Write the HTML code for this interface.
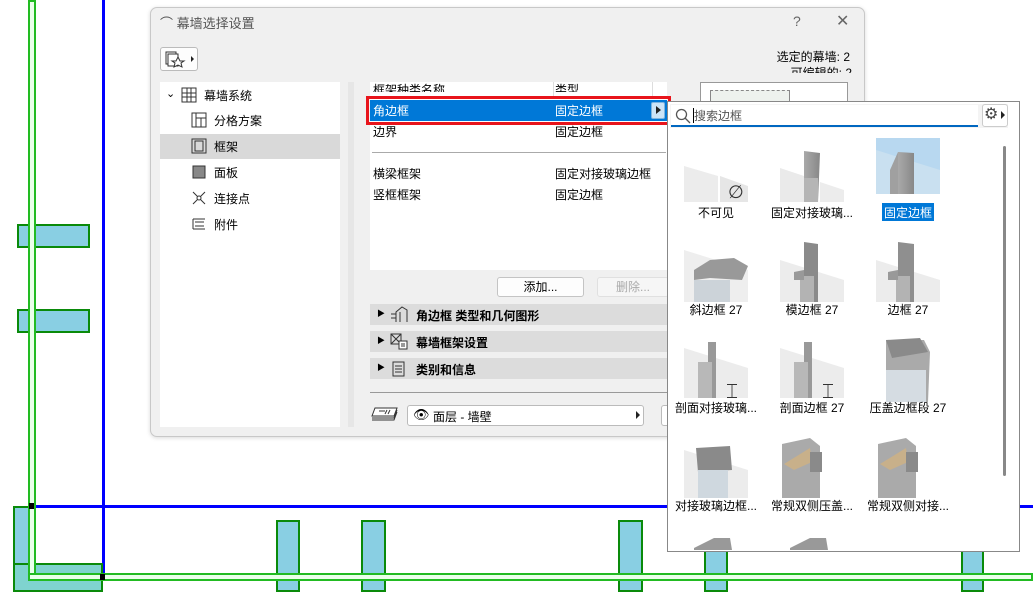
<!DOCTYPE html>
<html><head><meta charset="utf-8"><style>
*{margin:0;padding:0;box-sizing:border-box}
body{width:1033px;height:608px;overflow:hidden;background:#fff;position:relative;font-family:"Liberation Sans","Noto Sans CJK SC",sans-serif;font-size:12px;color:#000}
.a{position:absolute}
.pb{position:absolute;background:#89cfe3;border:2px solid #0a8a0a}
.t{position:absolute;white-space:nowrap}
.sec{position:absolute;left:370px;width:297px;height:21px;background:#dcdcdc;font-weight:bold}
.lab{position:absolute;width:96px;text-align:center;white-space:nowrap;font-size:12px}
</style></head><body>
<!-- canvas -->
<div class="a" style="left:102px;top:0;width:3px;height:578px;background:#0000ff"></div>
<div class="a" style="left:30px;top:505px;width:1003px;height:3px;background:#0000ff"></div>
<div class="pb" style="left:17px;top:224px;width:73px;height:24px"></div>
<div class="pb" style="left:17px;top:309px;width:73px;height:24px"></div>
<div class="pb" style="left:13px;top:506px;width:22px;height:86px"></div>
<div class="pb" style="left:13px;top:563px;width:90px;height:29px;background:#7fd3cf"></div>
<div class="pb" style="left:276px;top:520px;width:24px;height:72px"></div>
<div class="pb" style="left:361px;top:520px;width:25px;height:72px"></div>
<div class="pb" style="left:618px;top:520px;width:25px;height:72px"></div>
<div class="pb" style="left:704px;top:520px;width:24px;height:72px"></div>
<div class="pb" style="left:961px;top:548px;width:23px;height:44px"></div>
<div class="a" style="left:28px;top:0;width:8px;height:578px;border:2px solid #22bb22;background:#eaffea"></div>
<div class="a" style="left:28px;top:573px;width:1005px;height:8px;border:2px solid #22bb22;background:#eaffea"></div>
<div class="a" style="left:29px;top:503px;width:5px;height:6px;background:#000"></div>
<div class="a" style="left:100px;top:574px;width:5px;height:6px;background:#000"></div>

<!-- dialog -->
<div class="a" style="left:150px;top:7px;width:715px;height:430px;background:#f0f0f0;border:1px solid #c8c8c8;border-radius:7px;box-shadow:0 1px 4px rgba(0,0,0,.15)"></div>
<div class="t" style="left:160px;top:13px;font-size:13px;color:#555">⌒ 幕墙选择设置</div>
<div class="t" style="left:793px;top:13px;font-size:14px;color:#666">?</div>
<div class="t" style="left:836px;top:11px;font-size:16px;color:#666">✕</div>
<div class="a" style="left:160px;top:47px;width:38px;height:24px;background:#fdfdfd;border:1px solid #bbb;border-radius:3px"></div>
<svg class="a" style="left:164px;top:50px" width="32" height="18"><rect x="2" y="2" width="10" height="12" fill="none" stroke="#333"/><rect x="4" y="4" width="10" height="12" fill="#fff" stroke="#333"/><polygon points="14,7 16,11 20,11 17,13 18,17 14,15 10,17 11,13 8,11 12,11" fill="#fff" stroke="#333"/><polygon points="27,6 30,9 27,12" fill="#222"/></svg>
<div class="t" style="right:183px;top:48px;font-size:12px">选定的幕墙: 2</div>
<div class="a" style="left:780px;top:64px;width:80px;height:9px;overflow:hidden"><div class="t" style="right:8px;top:0;font-size:12px">可编辑的: 2</div></div>

<!-- tree -->
<div class="a" style="left:160px;top:82px;width:180px;height:345px;background:#fff"></div>
<div class="a" style="left:160px;top:134px;width:180px;height:25px;background:#d9d9d9"></div>
<div class="t" style="left:166px;top:87px;font-size:11px">⌄</div>
<svg class="a" style="left:181px;top:87px" width="16" height="16"><rect x="1" y="1" width="14" height="14" fill="none" stroke="#333"/><path d="M6 1v14M10 1v14M1 6h14M1 10h14" stroke="#333"/></svg>
<div class="t" style="left:204px;top:87px">幕墙系统</div>
<svg class="a" style="left:191px;top:112px" width="16" height="16"><rect x="1" y="1" width="14" height="14" fill="none" stroke="#333"/><path d="M5 1v14M5 6h10M10 6v9" stroke="#333"/></svg>
<div class="t" style="left:214px;top:112px">分格方案</div>
<svg class="a" style="left:191px;top:138px" width="16" height="16"><rect x="1" y="1" width="14" height="14" fill="none" stroke="#333"/><rect x="4" y="3" width="8" height="10" fill="none" stroke="#333"/></svg>
<div class="t" style="left:214px;top:138px">框架</div>
<svg class="a" style="left:191px;top:164px" width="16" height="16"><rect x="2" y="2" width="12" height="12" fill="#888" stroke="#333"/></svg>
<div class="t" style="left:214px;top:164px">面板</div>
<svg class="a" style="left:191px;top:190px" width="16" height="16"><path d="M2 2l12 12M14 2L2 14" stroke="#333"/><circle cx="8" cy="8" r="2" fill="#fff" stroke="#333"/></svg>
<div class="t" style="left:214px;top:190px">连接点</div>
<svg class="a" style="left:191px;top:216px" width="16" height="16"><path d="M2 3h12M2 13h12M4 6h9M4 10h9M2 3v10" stroke="#333" fill="none"/></svg>
<div class="t" style="left:214px;top:216px">附件</div>

<div class="a" style="left:348px;top:82px;width:6px;height:345px;background:#e6e6e6"></div>
<!-- table -->
<div class="a" style="left:370px;top:82px;width:297px;height:188px;background:#fff"></div>
<div class="a" style="left:553px;top:82px;width:1px;height:16px;background:#ddd"></div>
<div class="a" style="left:652px;top:82px;width:1px;height:16px;background:#ddd"></div>
<div class="a" style="left:370px;top:83px;width:297px;height:9px;overflow:hidden"><div class="t" style="left:3px;top:-2px">框架种类名称</div><div class="t" style="left:185px;top:-2px">类型</div></div>
<div class="a" style="left:366px;top:96px;width:305px;height:29px;border:3px solid #e8141b"></div>
<div class="a" style="left:370px;top:100px;width:297px;height:21px;background:#0078d7"></div>
<div class="t" style="left:373px;top:102px;color:#fff">角边框</div>
<div class="t" style="left:555px;top:102px;color:#fff">固定边框</div>
<div class="a" style="left:651px;top:102px;width:14px;height:17px;background:#cce4f7;border:1px solid #7fb5e0;border-radius:2px"></div>
<div class="a" style="left:656px;top:106px;border-left:5px solid #222;border-top:4px solid transparent;border-bottom:4px solid transparent"></div>
<div class="t" style="left:373px;top:123px">边界</div>
<div class="t" style="left:555px;top:123px">固定边框</div>
<div class="a" style="left:372px;top:152px;width:294px;height:1px;background:#aaa"></div>
<div class="t" style="left:373px;top:165px">横梁框架</div>
<div class="t" style="left:555px;top:165px">固定对接玻璃边框</div>
<div class="t" style="left:373px;top:186px">竖框框架</div>
<div class="t" style="left:555px;top:186px">固定边框</div>
<div class="a" style="left:497px;top:277px;width:87px;height:20px;background:#fdfdfd;border:1px solid #c4c4c4;border-radius:3px;text-align:center;line-height:18px">添加...</div>
<div class="a" style="left:597px;top:277px;width:72px;height:20px;background:#f6f6f6;border:1px solid #e0e0e0;border-radius:3px;text-align:center;line-height:18px;color:#aaa">删除...</div>
<div class="sec" style="top:304px"><span class="t" style="left:7px;top:4px;font-size:8px">▶</span><svg class="a" style="left:20px;top:2px" width="18" height="17"><path d="M1 8h5M1 12h5M6 16V6l6-5 5 3v12M10 16V6" stroke="#333" fill="none"/></svg><span class="t" style="left:46px;top:3px">角边框 类型和几何图形</span></div>
<div class="sec" style="top:331px"><span class="t" style="left:7px;top:4px;font-size:8px">▶</span><svg class="a" style="left:20px;top:2px" width="18" height="17"><rect x="1" y="1" width="10" height="10" fill="none" stroke="#333"/><path d="M1 1l10 10M11 1L1 11" stroke="#333"/><rect x="9" y="8" width="8" height="8" fill="#fff" stroke="#333"/><path d="M11 11h4M11 13h4" stroke="#333"/></svg><span class="t" style="left:46px;top:3px">幕墙框架设置</span></div>
<div class="sec" style="top:358px"><span class="t" style="left:7px;top:4px;font-size:8px">▶</span><svg class="a" style="left:22px;top:3px" width="14" height="16"><rect x="1" y="1" width="11" height="14" fill="none" stroke="#333"/><path d="M3 5h7M3 8h7M3 11h7" stroke="#333"/></svg><span class="t" style="left:46px;top:3px">类别和信息</span></div>
<div class="a" style="left:370px;top:392px;width:297px;height:1px;background:#999"></div>
<svg class="a" style="left:371px;top:406px" width="28" height="16"><path d="M4 2h22l-3 8H1z" fill="#fff" stroke="#333"/><path d="M1 12h22l3-8M1 14h22l3-8" fill="none" stroke="#333"/><path d="M8 5h6M16 4l-2 4M19 4l-2 4" stroke="#333"/></svg>
<div class="a" style="left:407px;top:405px;width:237px;height:21px;background:#fff;border:1px solid #bbb;border-radius:3px"></div>
<div class="t" style="left:413px;top:407px;font-size:13px">👁</div>
<div class="t" style="left:433px;top:408px">面层 - 墙壁</div>
<div class="a" style="left:636px;top:411px;border-left:4px solid #222;border-top:4px solid transparent;border-bottom:4px solid transparent"></div>
<div class="a" style="left:661px;top:405px;width:10px;height:21px;background:#fff;border:1px solid #bbb;border-radius:3px"></div>
<!-- preview -->
<div class="a" style="left:700px;top:82px;width:148px;height:20px;background:#fff;border:1px solid #999"></div>
<div class="a" style="left:710px;top:90px;width:80px;height:12px;background:#eef2ee;border:1px solid #888;border-top:1px dashed #888"></div>

<!-- popup -->
<div class="a" style="left:667px;top:101px;width:353px;height:451px;background:#fff;border:1px solid #888"></div>
<div class="a" style="left:670px;top:104px;width:338px;height:42px;background:#f4f4f4"></div>
<div class="a" style="left:671px;top:105px;width:307px;height:22px;background:#fff;border-bottom:2px solid #0067c0"></div>
<svg class="a" style="left:675px;top:108px" width="16" height="16"><circle cx="6.5" cy="6.5" r="5" fill="none" stroke="#555" stroke-width="1.3"/><path d="M10 10l5 5" stroke="#555" stroke-width="1.3"/></svg>
<div class="a" style="left:693px;top:108px;width:1px;height:15px;background:#000"></div>
<div class="t" style="left:694px;top:107px;color:#555">搜索边框</div>
<div class="a" style="left:982px;top:104px;width:26px;height:23px;background:#fff;border:1px solid #ccc;border-radius:3px"></div>
<div class="t" style="left:984px;top:104px;font-size:16px;color:#444">⚙</div>
<div class="a" style="left:1001px;top:111px;border-left:4px solid #222;border-top:4px solid transparent;border-bottom:4px solid transparent"></div>
<div class="a" style="left:670px;top:128px;width:338px;height:422px;background:#fff"></div>
<div class="a" style="left:1003px;top:146px;width:3px;height:330px;background:#888;border-radius:2px"></div>

<!-- thumbnails -->
<svg class="a" style="left:670px;top:130px" width="330" height="420">
<defs><linearGradient id="g" x1="0" x2="1"><stop offset="0" stop-color="#a9a9a9"/><stop offset="1" stop-color="#888"/></linearGradient></defs>
<polygon points="14,36 48,46 48,72 14,72" fill="#ececec"/><polygon points="50,46 78,56 78,72 50,72" fill="#e6e6e6"/>
<text x="58" y="68" font-size="18" fill="#333" font-family="DejaVu Sans">∅</text>
<polygon points="110,38 140,48 140,72 110,72" fill="#eaeaea"/><polygon points="150,52 174,60 174,72 150,72" fill="#ececec"/>
<polygon points="134,21 150,23 148,72 134,72" fill="url(#g)"/><rect x="134" y="48" width="14" height="24" fill="#b5b5b5"/>
<rect x="206" y="8" width="64" height="56" fill="#b8d8f0"/>
<polygon points="206,20 270,40 270,64 206,64" fill="#c9e0f0"/>
<polygon points="228,22 244,23 244,64 228,64" fill="url(#g)"/><polygon points="220,40 228,22 228,64 220,64" fill="#a0a0a0"/>
<polygon points="14,120 78,140 78,172 14,172" fill="#eee"/>
<polygon points="24,140 40,130 64,128 78,136 72,150 40,148 24,150" fill="#999"/><rect x="24" y="150" width="36" height="22" fill="#ccd3d9"/>
<polygon points="110,130 174,150 174,172 110,172" fill="#ececec"/>
<polygon points="134,112 148,114 148,172 134,172" fill="#8a8a8a"/><rect x="130" y="146" width="14" height="26" fill="#b3b3b3"/><polygon points="124,142 134,140 134,150 124,150" fill="#999"/>
<polygon points="206,130 270,150 270,172 206,172" fill="#ececec"/>
<polygon points="228,112 244,114 244,172 228,172" fill="#8f8f8f"/><rect x="226" y="146" width="14" height="26" fill="#b3b3b3"/><polygon points="218,142 228,140 228,150 218,150" fill="#999"/>
<polygon points="14,218 78,238 78,268 14,268" fill="#ececec"/>
<polygon points="38,212 46,212 46,268 38,268" fill="#999"/><rect x="28" y="232" width="14" height="36" fill="#b8b8b8"/>
<text x="56" y="268" font-size="20" fill="#333">⌶</text>
<polygon points="110,218 174,238 174,268 110,268" fill="#ececec"/>
<polygon points="134,212 142,212 142,268 134,268" fill="#999"/><rect x="124" y="232" width="14" height="36" fill="#b8b8b8"/>
<text x="152" y="268" font-size="20" fill="#333">⌶</text>
<polygon points="216,210 254,210 260,222 258,272 216,272" fill="#aaa"/><polygon points="216,210 250,208 258,222 222,228" fill="#8a8a8a"/><rect x="216" y="240" width="40" height="32" fill="#d5dce2"/>
<polygon points="14,320 78,340 78,368 14,368" fill="#ececec"/>
<polygon points="26,318 60,316 62,340 28,342" fill="#8a8a8a"/><rect x="28" y="340" width="30" height="28" fill="#cfd8df"/>
<polygon points="112,314 140,308 150,316 150,368 112,368" fill="#aaa"/><polygon points="114,334 140,318 142,332 124,340" fill="#c8b08a"/><rect x="140" y="322" width="12" height="20" fill="#8a8a8a"/>
<polygon points="208,314 236,308 246,316 246,368 208,368" fill="#aaa"/><polygon points="210,334 236,318 238,332 220,340" fill="#c8b08a"/><rect x="236" y="322" width="12" height="20" fill="#8a8a8a"/>
<polygon points="24,418 44,408 60,408 62,420 24,420" fill="#999"/>
<polygon points="120,418 140,408 156,408 158,420 120,420" fill="#999"/>
</svg>
<div class="lab" style="left:668px;top:204px">不可见</div>
<div class="lab" style="left:764px;top:204px">固定对接玻璃...</div>
<div class="a" style="left:882px;top:203px;width:52px;height:18px;background:#0078d7"></div>
<div class="lab" style="left:860px;top:204px;color:#fff">固定边框</div>
<div class="lab" style="left:668px;top:301px">斜边框 27</div>
<div class="lab" style="left:764px;top:301px">模边框 27</div>
<div class="lab" style="left:860px;top:301px">边框 27</div>
<div class="lab" style="left:668px;top:399px">剖面对接玻璃...</div>
<div class="lab" style="left:764px;top:399px">剖面边框 27</div>
<div class="lab" style="left:860px;top:399px">压盖边框段 27</div>
<div class="lab" style="left:668px;top:497px">对接玻璃边框...</div>
<div class="lab" style="left:764px;top:497px">常规双侧压盖...</div>
<div class="lab" style="left:860px;top:497px">常规双侧对接...</div>
</body></html>
